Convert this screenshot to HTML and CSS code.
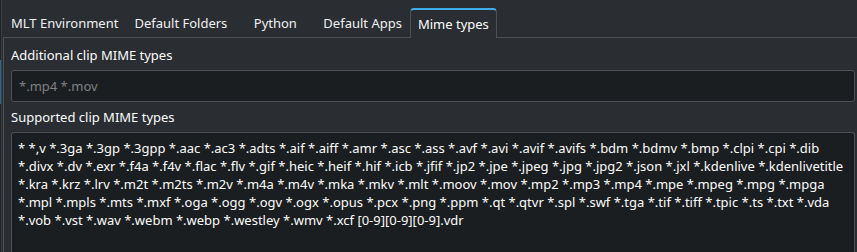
FILE: index.html
```html
<!DOCTYPE html>
<html lang="en">
<head>
    <meta charset="UTF-8">
    <title>Mime types</title>
    <link rel="stylesheet" href="styles.css">
</head>
<body>
    <div class="window">
        <div class="edge"><div class="edge-focus"></div></div>

        <div class="main">
            <div class="tab-bar">
                <div class="tab">MLT Environment</div>
                <div class="tab">Default Folders</div>
                <div class="tab">Python</div>
                <div class="tab">Default Apps</div>
                <div class="tab active">Mime types</div>
            </div>

            <div class="pane">
                <div class="field-label">Additional clip MIME types</div>
                <div class="line-edit">
                    <span class="placeholder">*.mp4 *.mov</span>
                </div>

                <div class="field-label">Supported clip MIME types</div>
                <div class="text-edit">
                    <div>* *,v *.3ga *.3gp *.3gpp *.aac *.ac3 *.adts *.aif *.aiff *.amr *.asc *.ass *.avf *.avi *.avif *.avifs *.bdm *.bdmv *.bmp *.clpi *.cpi *.dib</div>
                    <div>*.divx *.dv *.exr *.f4a *.f4v *.flac *.flv *.gif *.heic *.heif *.hif *.icb *.jfif *.jp2 *.jpe *.jpeg *.jpg *.jpg2 *.json *.jxl *.kdenlive *.kdenlivetitle</div>
                    <div>*.kra *.krz *.lrv *.m2t *.m2ts *.m2v *.m4a *.m4v *.mka *.mkv *.mlt *.moov *.mov *.mp2 *.mp3 *.mp4 *.mpe *.mpeg *.mpg *.mpga</div>
                    <div>*.mpl *.mpls *.mts *.mxf *.oga *.ogg *.ogv *.ogx *.opus *.pcx *.png *.ppm *.qt *.qtvr *.spl *.swf *.tga *.tif *.tiff *.tpic *.ts *.txt *.vda</div>
                    <div>*.vob *.vst *.wav *.webm *.webp *.westley *.wmv *.xcf [0-9][0-9][0-9].vdr</div>
                </div>
            </div>
        </div>
    </div>
</body>
</html>
```

FILE: styles.css
```css
* {
    margin: 0;
    padding: 0;
    box-sizing: border-box;
}

body {
    background: #2a2e32;
    color: #fcfcfc;
    font-family: 'Noto Sans', 'DejaVu Sans', sans-serif;
    font-size: 13px;
    line-height: 18px;
    overflow: hidden;
}

.window {
    display: flex;
    height: 252px;
}

.edge {
    width: 2px;
    flex-shrink: 0;
    background: #202326;
    border-right: 1px solid #3b3f44;
}

.edge-focus {
    width: 1px;
    height: 44px;
    margin-top: 60px;
    background: #2b6a8e;
}

.main {
    flex: 1;
    display: flex;
    flex-direction: column;
    margin-left: 1px;
    min-width: 0;
}

/* tab row */
.tab-bar {
    height: 38px;
    display: flex;
    align-items: flex-end;
}

.tab {
    height: 30px;
    min-width: 80px;
    padding: 1px 8px 0;
    display: flex;
    align-items: center;
    justify-content: center;
    white-space: nowrap;
    color: #eff0f1;
    border-bottom: 1px solid #4d5155;
}

.tab.active {
    border: 1px solid #4d5155;
    border-top: 2px solid #3daee9;
    border-bottom: none;
    border-radius: 4px 4px 0 0;
    color: #fcfcfc;
    padding: 0 7px 1px;
}

.tab-bar::after {
    content: '';
    flex: 1;
    height: 30px;
    border-bottom: 1px solid #4d5155;
}

/* page body */
.pane {
    flex: 1;
    border-left: 1px solid #4d5155;
    padding: 8px 2px 0 7px;
    display: flex;
    flex-direction: column;
    gap: 6px;
}

.field-label {
    color: #fcfcfc;
}

.line-edit {
    height: 32px;
    background: #1b1e20;
    border: 1px solid #4d5155;
    border-radius: 3px;
    padding: 0 7px;
    display: flex;
    align-items: center;
}

.placeholder {
    color: #7e8185;
}

.text-edit {
    flex: 1;
    background: #1b1e20;
    border: 1px solid #4d5155;
    border-bottom: none;
    border-radius: 3px 3px 0 0;
    padding: 6px 6px 0 6px;
    white-space: nowrap;
    overflow: hidden;
}
```
